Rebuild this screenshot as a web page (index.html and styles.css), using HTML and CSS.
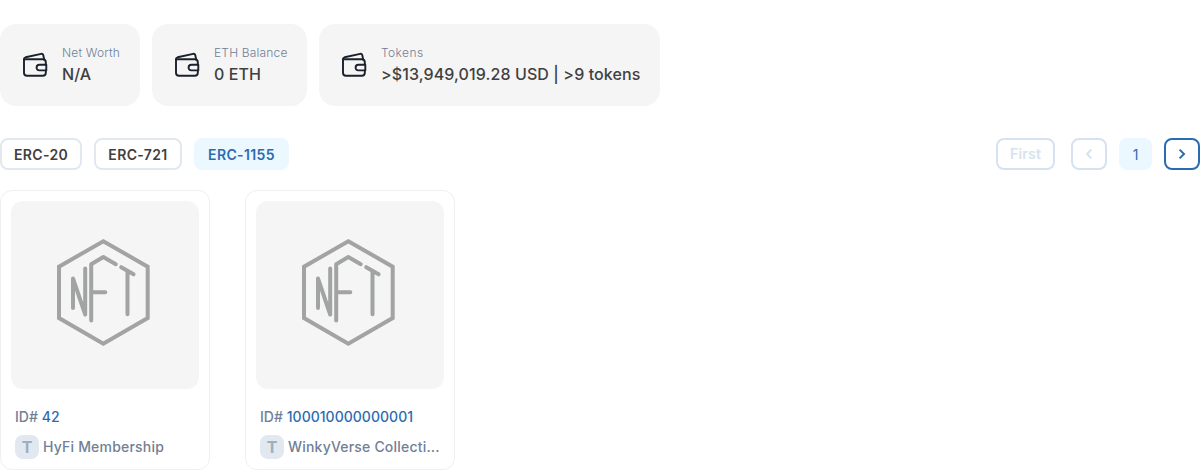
FILE: index.html
```
<!DOCTYPE html>
<html lang="en">
<head>
<meta charset="utf-8">
<title>Address tokens</title>
<link rel="stylesheet" href="styles.css">
</head>
<body>
<svg class="defs" width="0" height="0">
  <symbol id="wallet" viewBox="0 0 30 30">
    <g fill="none" stroke="#1a202c" stroke-width="1.9" stroke-linejoin="round" stroke-linecap="round">
      <path d="M25.8 14.5V12.2Q25.8 9.2 22.8 9.2H4V22.8Q4 25.8 7 25.8H22.8Q25.8 25.8 25.8 22.8V20.4"/>
      <path d="M4 9.2Q4 7.7 5.6 7.3L21.2 3.9Q22.9 3.5 23.3 5.2L24.2 9.6"/>
      <path d="M26.3 14.8H19.4Q16.6 14.8 16.6 17.6T19.4 20.4H26.3Z"/>
    </g>
  </symbol>
  <symbol id="nft" viewBox="0 0 188 188">
    <g fill="none" stroke="#a2a3a3" stroke-width="4" stroke-linejoin="round" stroke-linecap="round">
      <path d="M92.3 40.2L136.7 65.7V117L92.3 142.8L48 117V65.7Z" stroke-linejoin="miter"/>
      <path d="M62 107V77.5L74.2 113.5V67.5"/>
      <path d="M80.2 119.5V63.3L92.3 56L104.8 63.2M80.2 91.3H94.3"/>
      <path d="M110.2 66.2L122.6 73.3M116.5 71V113.3"/>
    </g>
  </symbol>
</svg>
<section class="stats">
  <div class="stat"><svg class="stat-icon"><use href="#wallet"/></svg><div><div class="stat-label">Net Worth</div><div class="stat-value">N/A</div></div></div>
  <div class="stat"><svg class="stat-icon"><use href="#wallet"/></svg><div><div class="stat-label">ETH Balance</div><div class="stat-value">0 ETH</div></div></div>
  <div class="stat"><svg class="stat-icon"><use href="#wallet"/></svg><div><div class="stat-label tokens">Tokens</div><div class="stat-value">&gt;$13,949,019.28 USD | &gt;9 tokens</div></div></div>
</section>
<nav class="toolbar">
  <div class="tabs">
    <button class="btn erc20">ERC-20</button>
    <button class="btn erc721">ERC-721</button>
    <button class="btn erc1155 active">ERC-1155</button>
  </div>
  <div class="pager">
    <button class="btn disabled first">First</button>
    <button class="btn disabled arrow"><svg width="16" height="16" viewBox="0 0 16 16"><path d="M10.4 3.6L6 8L10.4 12.4"/></svg></button>
    <span class="page">1</span>
    <button class="btn next arrow"><svg width="16" height="16" viewBox="0 0 16 16"><path d="M5.6 3.6L10 8L5.6 12.4"/></svg></button>
  </div>
</nav>
<main class="cards">
  <article class="card">
    <div class="media"><svg><use href="#nft"/></svg></div>
    <div class="token-id">ID# <a>42</a></div>
    <div class="token"><span class="badge">T</span><span class="name">HyFi Membership</span></div>
  </article>
  <article class="card">
    <div class="media"><svg><use href="#nft"/></svg></div>
    <div class="token-id">ID# <a>100010000000001</a></div>
    <div class="token"><span class="badge">T</span><span class="name">WinkyVerse Collecti...</span></div>
  </article>
</main>
</body>
</html>
```
FILE: styles.css
```
* { box-sizing: border-box; }
body { margin: 0; padding-top: 24px; background: #fff; color: #404041; font-family: Inter, sans-serif; overflow: hidden; }
.defs { display: block; }
.stats { display: flex; gap: 12px; }
.stat { display: flex; align-items: center; gap: 12px; height: 82px; padding: 0 20px; border-radius: 16px; background: #f5f5f5; white-space: nowrap; }
.stat:nth-child(1) { width: 140px; }
.stat:nth-child(2) { width: 155px; }
.stat:nth-child(3) { width: 341px; }
.stat-icon { width: 30px; height: 30px; flex: none; }
.stat-label { padding-top: 1px; font-size: 12px; line-height: 16px; font-weight: 350; letter-spacing: 0.18px; color: #718096; }
.stat-label.tokens { letter-spacing: 0.4px; }
.stat-value { padding-top: 1px; font-size: 16px; line-height: 24px; font-weight: 500; letter-spacing: 0.1px; }
.toolbar { display: flex; justify-content: space-between; margin-top: 32px; }
.tabs, .pager { display: flex; align-items: center; gap: 12px; }
.btn { display: flex; align-items: center; justify-content: center; height: 32px; padding: 2px 0 0; border: 2px solid #e2e8f0; border-radius: 8px; background: none; color: #404041; font: 600 14px/20px Inter, sans-serif; letter-spacing: 0.36px; }
.btn.erc20 { width: 82px; }
.btn.erc721 { width: 88px; }
.btn.erc1155 { width: 95px; }
.btn.active { background: #ebf8ff; border-color: #ebf8ff; color: #2b6cb0; }
.btn.disabled { border-color: #d5e2ef; color: #d5e2ef; }
.btn.first { width: 59px; margin-right: 4px; padding: 0; letter-spacing: 0.2px; }
.btn.arrow { width: 36px; padding: 0; }
.btn.next { border-color: #2b6cb0; color: #2b6cb0; }
.arrow path { fill: none; stroke: currentColor; stroke-width: 2; }
.page { display: flex; align-items: center; justify-content: center; width: 33px; height: 32px; border-radius: 8px; background: #ebf8ff; color: #2b6cb0; font-size: 14px; font-weight: 400; }
.cards { display: flex; gap: 35px; margin-top: 20px; }
.card { width: 210px; height: 280px; padding: 10px; border: 1px solid #efefef; border-radius: 12px; font-size: 14px; line-height: 24px; font-weight: 500; color: #718096; }
.media { height: 188px; border-radius: 12px; background: #f5f5f5; }
.media svg { display: block; width: 188px; height: 188px; }
.token-id { margin: 16px 4px 0; letter-spacing: 0.03px; }
.token-id a { color: #2b6cb0; }
.token { display: flex; align-items: center; gap: 4px; margin: 6px 4px 0; }
.badge { flex: none; width: 24px; height: 24px; border-radius: 8px; background: #e2e8f0; color: #a0aec0; font-size: 16px; font-weight: 700; text-align: center; }
.name { white-space: nowrap; letter-spacing: 0.2px; }
```
